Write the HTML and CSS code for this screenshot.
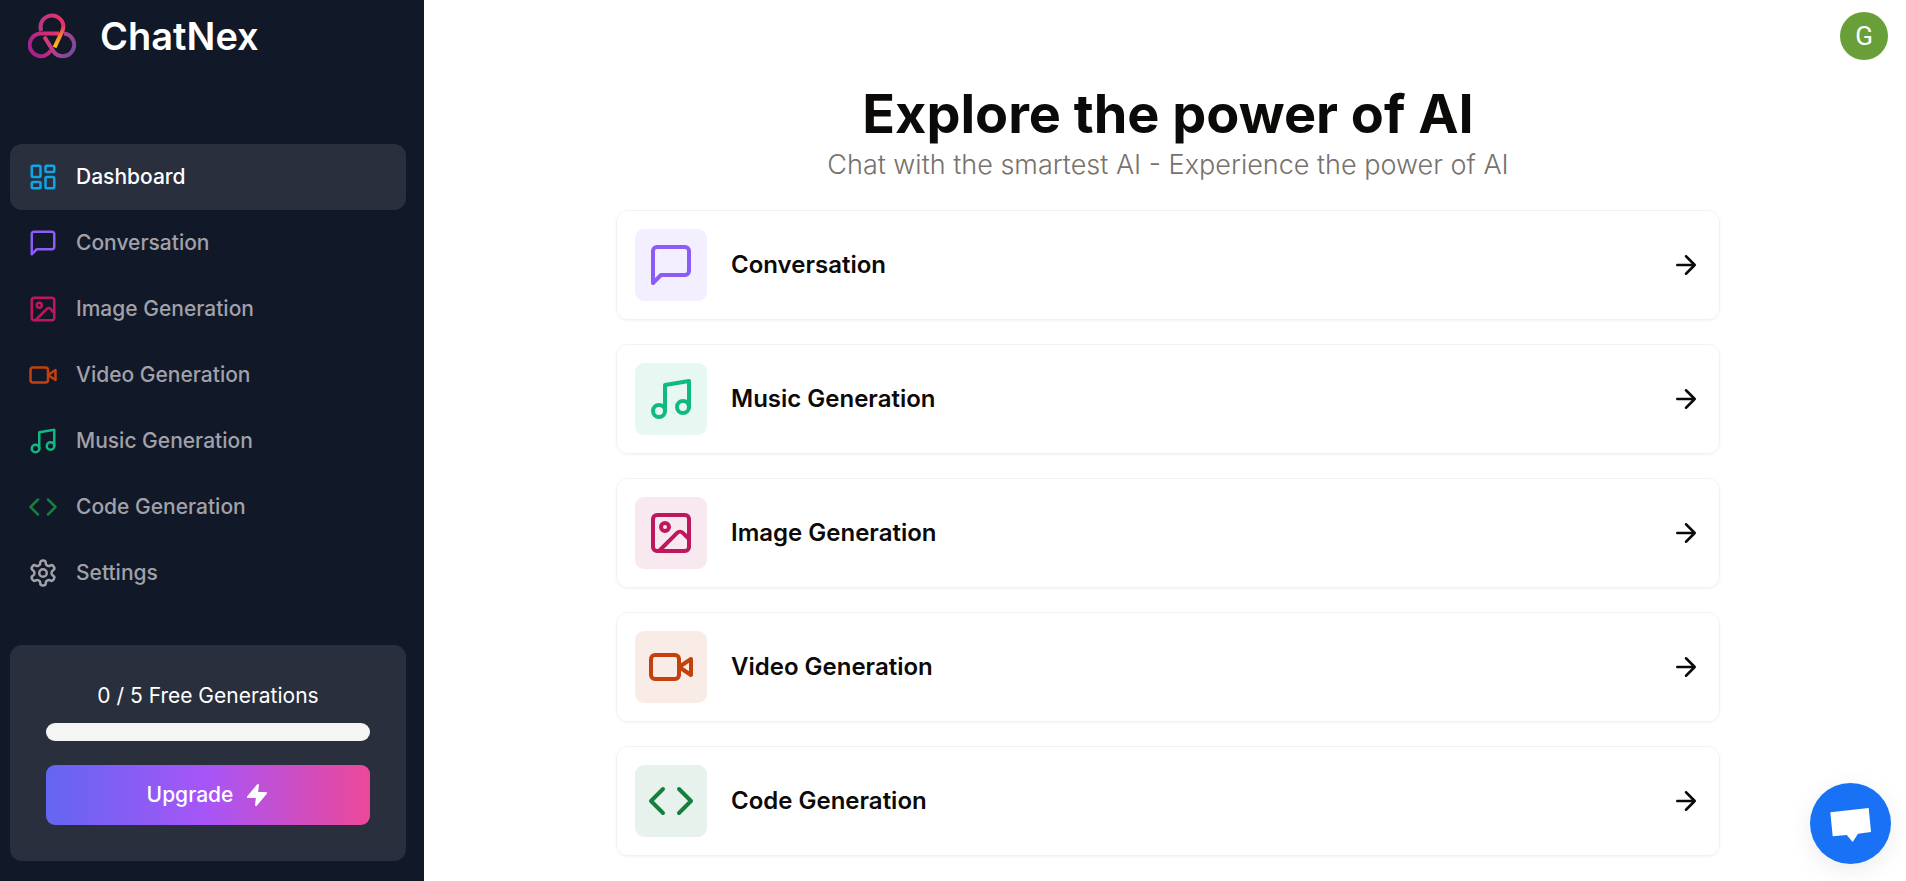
FILE: index.html
```html
<!DOCTYPE html>
<html lang="en">
<head>
<meta charset="utf-8">
<meta name="viewport" content="width=device-width, initial-scale=1">
<title>ChatNex</title>
<link rel="stylesheet" href="styles.css">
</head>
<body>
<svg class="sprite" aria-hidden="true">
  <symbol id="i-dashboard" viewBox="0 0 24 24"><rect x="3" y="3" width="7" height="9" rx="1"/><rect x="14" y="3" width="7" height="5" rx="1"/><rect x="14" y="12" width="7" height="9" rx="1"/><rect x="3" y="16" width="7" height="5" rx="1"/></symbol>
  <symbol id="i-message" viewBox="0 0 24 24"><path d="M21 15a2 2 0 0 1-2 2H7l-4 4V5a2 2 0 0 1 2-2h14a2 2 0 0 1 2 2z"/></symbol>
  <symbol id="i-image" viewBox="0 0 24 24"><rect x="3" y="3" width="18" height="18" rx="2"/><circle cx="9" cy="9" r="2"/><path d="m21 15-3.086-3.086a2 2 0 0 0-2.828 0L6 21"/></symbol>
  <symbol id="i-video" viewBox="0 0 24 24"><path d="m22 8-6 4 6 4V8Z"/><rect x="2" y="6" width="14" height="12" rx="2"/></symbol>
  <symbol id="i-music" viewBox="0 0 24 24"><path d="M9 18V5l12-2v13"/><circle cx="6" cy="18" r="3"/><circle cx="18" cy="16" r="3"/></symbol>
  <symbol id="i-code" viewBox="0 0 24 24"><path d="m16 18 6-6-6-6M8 6l-6 6 6 6"/></symbol>
  <symbol id="i-settings" viewBox="0 0 24 24"><path d="M12.22 2h-.44a2 2 0 0 0-2 2v.18a2 2 0 0 1-1 1.73l-.43.25a2 2 0 0 1-2 0l-.15-.08a2 2 0 0 0-2.73.73l-.22.38a2 2 0 0 0 .73 2.73l.15.1a2 2 0 0 1 1 1.72v.51a2 2 0 0 1-1 1.74l-.15.09a2 2 0 0 0-.73 2.73l.22.38a2 2 0 0 0 2.73.73l.15-.08a2 2 0 0 1 2 0l.43.25a2 2 0 0 1 1 1.73V20a2 2 0 0 0 2 2h.44a2 2 0 0 0 2-2v-.18a2 2 0 0 1 1-1.73l.43-.25a2 2 0 0 1 2 0l.15.08a2 2 0 0 0 2.73-.73l.22-.39a2 2 0 0 0-.73-2.73l-.15-.08a2 2 0 0 1-1-1.74v-.5a2 2 0 0 1 1-1.74l.15-.09a2 2 0 0 0 .73-2.73l-.22-.38a2 2 0 0 0-2.73-.73l-.15.08a2 2 0 0 1-2 0l-.43-.25a2 2 0 0 1-1-1.73V4a2 2 0 0 0-2-2z"/><circle cx="12" cy="12" r="3"/></symbol>
  <symbol id="i-arrow" viewBox="0 0 24 24"><path d="M5 12h14M12 5l7 7-7 7"/></symbol>
  <symbol id="i-zap" viewBox="0 0 24 24"><path d="M13 2 3 14h9l-1 8 10-12h-9l1-8z"/></symbol>
</svg>
<div class="layout">
  <aside class="sidebar">
    <a class="brand" href="#">
      <svg class="brand-logo" viewBox="0 0 48 48" aria-hidden="true">
        <defs>
          <linearGradient id="g-top" gradientUnits="userSpaceOnUse" x1="13" y1="18" x2="35" y2="10"><stop offset="0" stop-color="#b23a86"/><stop offset="1" stop-color="#ea2f6b"/></linearGradient>
          <linearGradient id="g-tail" gradientUnits="userSpaceOnUse" x1="35" y1="13" x2="27" y2="35"><stop offset="0" stop-color="#ea2f6b"/><stop offset=".45" stop-color="#f4803a"/><stop offset="1" stop-color="#fdc10a"/></linearGradient>
          <linearGradient id="g-left" gradientUnits="userSpaceOnUse" x1="2" y1="38" x2="31" y2="24"><stop offset="0" stop-color="#a3218c"/><stop offset="1" stop-color="#e8326c"/></linearGradient>
          <linearGradient id="g-right" gradientUnits="userSpaceOnUse" x1="17" y1="25" x2="44" y2="42"><stop offset="0" stop-color="#e8357a"/><stop offset=".5" stop-color="#b0408f"/><stop offset="1" stop-color="#774b9f"/></linearGradient>
        </defs>
        <g fill="none" stroke-width="4">
          <path stroke="url(#g-right)" d="M36 21.4A11.4 11.4 0 1 1 25 38.6L16.3 24.8"/>
          <path stroke="url(#g-left)" d="M31 21.4H13.4A11.4 11.4 0 1 0 22.8 38.6"/>
          <path stroke="url(#g-top)" d="M13.2 19A11.5 11.5 0 1 1 35.4 13.6"/>
          <path stroke="url(#g-tail)" d="M35.4 13.2Q35.6 16.4 34.2 19.4L26.6 35.4"/>
        </g>
      </svg>
      <span class="brand-name">ChatNex</span>
    </a>
    <nav class="nav">
      <a class="nav-link active" href="#"><svg class="icon sky"><use href="#i-dashboard"/></svg>Dashboard</a>
      <a class="nav-link" href="#"><svg class="icon violet"><use href="#i-message"/></svg>Conversation</a>
      <a class="nav-link" href="#"><svg class="icon pink"><use href="#i-image"/></svg>Image Generation</a>
      <a class="nav-link" href="#"><svg class="icon orange"><use href="#i-video"/></svg>Video Generation</a>
      <a class="nav-link" href="#"><svg class="icon emerald"><use href="#i-music"/></svg>Music Generation</a>
      <a class="nav-link" href="#"><svg class="icon green"><use href="#i-code"/></svg>Code Generation</a>
      <a class="nav-link" href="#"><svg class="icon"><use href="#i-settings"/></svg>Settings</a>
    </nav>
    <section class="quota">
      <p class="quota-text" id="quota-label">0 / 5 Free Generations</p>
      <div class="quota-bar" role="progressbar" aria-labelledby="quota-label" aria-valuemin="0" aria-valuemax="5" aria-valuenow="0"></div>
      <button class="upgrade" type="button">Upgrade<svg class="icon zap"><use href="#i-zap"/></svg></button>
    </section>
  </aside>
  <div class="page">
    <header class="topbar"><button class="avatar" type="button" aria-label="Account">G</button></header>
    <main class="content">
      <h1 class="title">Explore the power of AI</h1>
      <p class="subtitle">Chat with the smartest AI - Experience the power of AI</p>
      <div class="cards">
        <a class="card" href="#"><span class="tile violet"><svg class="icon large"><use href="#i-message"/></svg></span><span class="card-label">Conversation</span><svg class="icon"><use href="#i-arrow"/></svg></a>
        <a class="card" href="#"><span class="tile emerald"><svg class="icon large"><use href="#i-music"/></svg></span><span class="card-label">Music Generation</span><svg class="icon"><use href="#i-arrow"/></svg></a>
        <a class="card" href="#"><span class="tile pink"><svg class="icon large"><use href="#i-image"/></svg></span><span class="card-label">Image Generation</span><svg class="icon"><use href="#i-arrow"/></svg></a>
        <a class="card" href="#"><span class="tile orange"><svg class="icon large"><use href="#i-video"/></svg></span><span class="card-label">Video Generation</span><svg class="icon"><use href="#i-arrow"/></svg></a>
        <a class="card" href="#"><span class="tile green"><svg class="icon large"><use href="#i-code"/></svg></span><span class="card-label">Code Generation</span><svg class="icon"><use href="#i-arrow"/></svg></a>
      </div>
    </main>
  </div>
</div>
<button class="chat" type="button" aria-label="Open chat">
  <svg class="chat-icon" viewBox="0 0 81 81" aria-hidden="true"><path fill="#fff" d="M20.3 29.3 58.7 25 61 49l-13 1.7-5.3 8.3-6-7-14 1.3z"/></svg>
</button>
</body>
</html>
```
FILE: styles.css
```css
*, *::before, *::after { box-sizing: border-box; }
body {
  margin: 0;
  background: #fff;
  color: #0c0a09;
  font-family: Inter, "Liberation Sans", sans-serif;
  font-size: 21px;
  line-height: 30px;
}
h1, p { margin: 0; }
a { color: inherit; text-decoration: none; }
button { border: 0; padding: 0; font: inherit; cursor: pointer; }
.sprite { position: absolute; width: 0; height: 0; }

.icon {
  flex: none;
  width: 30px;
  height: 30px;
  fill: none;
  stroke: currentColor;
  stroke-width: 2;
  stroke-linecap: round;
  stroke-linejoin: round;
}
.icon.large { width: 48px; height: 48px; }
.sky { color: #0ea5e9; }
.violet { color: #8b5cf6; }
.pink { color: #be185d; }
.orange { color: #c2410c; }
.emerald { color: #10b981; }
.green { color: #15803d; }

.layout { display: flex; min-height: 100vh; }
.sidebar {
  flex: none;
  display: flex;
  flex-direction: column;
  width: 424px;
  padding: 12px 18px 20px 10px;
  background: #111827;
  color: #fff;
}
.brand { display: flex; align-items: center; gap: 24px; padding-left: 18px; margin-bottom: 84px; }
.brand-logo { width: 48px; height: 48px; }
.brand-name { font-size: 38px; font-weight: 600; line-height: 48px; }
.nav { display: flex; flex-direction: column; }
.nav-link {
  display: flex;
  align-items: center;
  gap: 18px;
  padding: 18px;
  border-radius: 12px;
  color: #a1a1aa;
  font-weight: 500;
}
.nav-link.active { background: rgb(255 255 255 / 10%); color: #fff; }
.quota {
  margin-top: auto;
  padding: 36px;
  border-radius: 12px;
  background: rgb(255 255 255 / 10%);
}
.quota-text { text-align: center; }
.quota-bar { height: 18px; margin: 12px 0 24px; border-radius: 9px; background: #f5f5f4; }
.upgrade {
  display: flex;
  align-items: center;
  justify-content: center;
  gap: 12px;
  width: 100%;
  height: 60px;
  border-radius: 9px;
  background: linear-gradient(to right, #6366f1, #a855f7, #ec4899);
  color: #fff;
  font-weight: 500;
}
.icon.zap { width: 24px; height: 24px; fill: #fff; }

.page { flex: 1; min-width: 0; }
.topbar { display: flex; justify-content: flex-end; padding: 12px 18px 24px; }
.avatar {
  width: 48px;
  height: 48px;
  border-radius: 50%;
  background: #689f38;
  color: #fff;
  font-family: Roboto, sans-serif;
  font-size: 26px;
}
.content { padding: 0 186px 24px 192px; }
.title { font-size: 54px; font-weight: 700; line-height: 60px; text-align: center; }
.subtitle { color: #78716c; font-size: 27px; font-weight: 300; line-height: 42px; text-align: center; }
.cards { display: grid; gap: 24px; margin-top: 24px; }
.card {
  display: flex;
  align-items: center;
  gap: 24px;
  padding: 18px;
  border: 1px solid rgb(0 0 0 / 5%);
  border-radius: 12px;
  box-shadow: 0 1px 3px rgb(0 0 0 / 5%);
  font-size: 24px;
  font-weight: 600;
  line-height: 36px;
}
.tile { display: flex; padding: 12px; border-radius: 9px; }
.tile.violet { background: #f3effe; }
.tile.emerald { background: #e7f8f2; }
.tile.pink { background: #f8e8ef; }
.tile.orange { background: #f9ece7; }
.tile.green { background: #e8f2ec; }
.card-label { flex: 1; }

.chat {
  position: fixed;
  right: 15px;
  bottom: 17px;
  width: 81px;
  height: 81px;
  border-radius: 50%;
  background: #1972f5;
  box-shadow: 0 6px 24px rgb(0 0 0 / 8%);
}
.chat-icon { display: block; width: 100%; height: 100%; }
```
